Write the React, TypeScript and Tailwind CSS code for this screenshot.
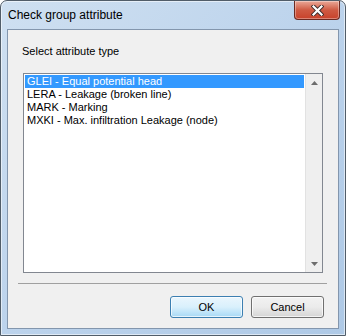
const FONT = "font-['Liberation_Sans',Arial,sans-serif]"

const ITEMS = [
  'GLEI - Equal potential head',
  'LERA - Leakage (broken line)',
  'MARK - Marking',
  'MXKI - Max. infiltration Leakage (node)',
]

function CloseButton() {
  return (
    <div className="mr-[5px] flex h-[19px] w-[46px] items-center justify-center rounded-b-[4px] border border-t-0 border-[#6b2a22] bg-gradient-to-b from-[#e9a898] via-[#cf5a43] to-[#c8412a] shadow-[inset_0_0_0_1px_rgba(255,255,255,0.35)]">
      <svg width="13" height="11" viewBox="0 0 13 11">
        <path d="M2.5 1.5 L10.5 9.5 M10.5 1.5 L2.5 9.5" stroke="#3b2a2a" strokeWidth="4" strokeLinecap="square" />
        <path d="M2.5 1.5 L10.5 9.5 M10.5 1.5 L2.5 9.5" stroke="#ffffff" strokeWidth="2.2" strokeLinecap="square" />
      </svg>
    </div>
  )
}

function Scrollbar() {
  return (
    <div className="flex w-[17px] flex-col justify-between border-l border-[#e2e2e2] bg-[#efefef]">
      <div className="flex h-[17px] items-center justify-center">
        <svg width="7" height="4" viewBox="0 0 7 4">
          <path d="M3.5 0 L7 4 L0 4 Z" fill="#6d6d6d" />
        </svg>
      </div>
      <div className="flex h-[17px] items-center justify-center">
        <svg width="7" height="4" viewBox="0 0 7 4">
          <path d="M0 0 L7 0 L3.5 4 Z" fill="#6d6d6d" />
        </svg>
      </div>
    </div>
  )
}

export default function App() {
  return (
    <div className={`h-[336px] w-[346px] bg-white ${FONT}`}>
      <div className="flex h-[336px] w-[346px] flex-col rounded-t-[7px] border border-[#515d69] bg-gradient-to-br from-[#cfe0f1] via-[#bcd3ec] to-[#aec9e6] shadow-[inset_0_0_0_1px_rgba(255,255,255,0.55)]">
        {/* title bar */}
        <div className="flex h-[28px] items-start justify-between">
          <span className="mt-[7px] pl-[7px] text-[12px] leading-[15px] text-black">Check group attribute</span>
          <CloseButton />
        </div>

        {/* client area */}
        <div className="mx-[6px] mb-[6px] flex flex-1 flex-col border border-[#8396ad] bg-[#f0f0f0] text-[11px] leading-[13px] text-black">
          <div className="pl-[14px] pt-[15px]">Select attribute type</div>

          <div className="mx-[15px] mt-[15px] flex h-[200px] border border-[#828790] bg-white">
            <div className="flex-1 p-px">
              {ITEMS.map((item, i) => (
                <div
                  key={item}
                  className={`h-[13px] whitespace-nowrap pl-[2px] leading-[13px] ${
                    i === 0 ? 'bg-[#3399ff] text-white' : 'text-black'
                  }`}
                >
                  {item}
                </div>
              ))}
            </div>
            <Scrollbar />
          </div>

          <div className="ml-[10px] mr-[11px] mt-[10px] h-px bg-[#a0a0a0]" />

          <div className="mt-[12px] flex justify-end gap-[8px] pr-[14px]">
            <button className="h-[22px] w-[73px] rounded-[3px] border border-[#3c7fb1] bg-gradient-to-b from-[#eaf6fd] via-[#d9f0fc] to-[#a7d9f5] text-[11px] shadow-[inset_0_0_0_1px_rgba(255,255,255,0.7)]">
              OK
            </button>
            <button className="h-[22px] w-[73px] rounded-[3px] border border-[#707070] bg-gradient-to-b from-[#f2f2f2] via-[#ebebeb] to-[#d5d5d5] text-[11px] shadow-[inset_0_0_0_1px_rgba(255,255,255,0.7)]">
              Cancel
            </button>
          </div>
        </div>
      </div>
    </div>
  )
}
